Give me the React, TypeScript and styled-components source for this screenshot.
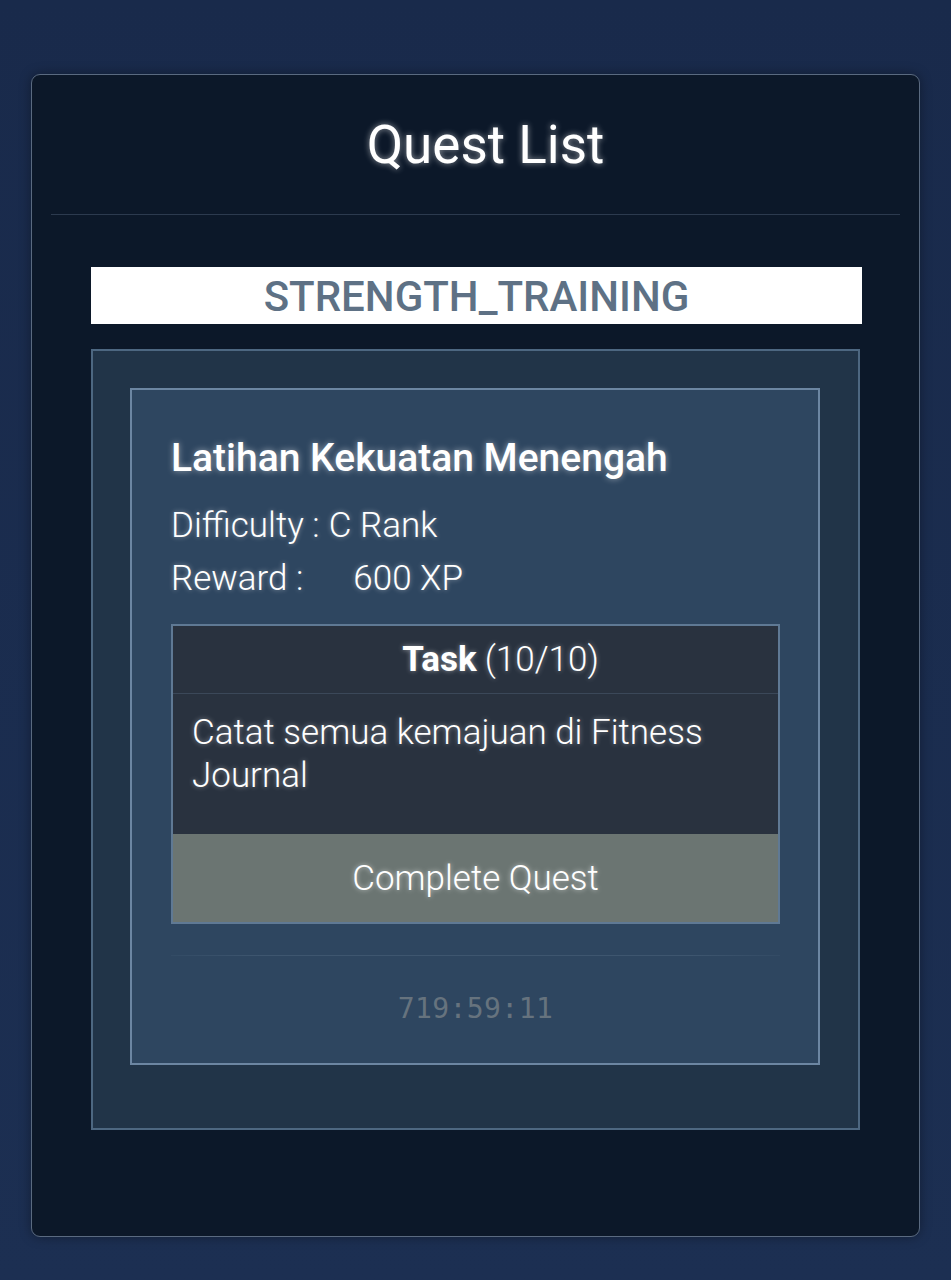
import React from "react";
import styled, { createGlobalStyle } from "styled-components";

const Global = createGlobalStyle`
  html, body {
    margin: 0;
    padding: 0;
    background: #1a2c4e;
    font-family: Roboto, "Noto Sans", "Liberation Sans", sans-serif;
  }
  * { box-sizing: border-box; }
`;

const Page = styled.div`
  min-height: 1280px;
  padding: 74px 31px 44px;
  background: linear-gradient(180deg, #192a4b 0%, #1c2f52 100%);
`;

const Card = styled.section`
  background: #0c1829;
  border: 1px solid #5a6a80;
  border-radius: 9px;
  padding: 0 0 106px;
  box-shadow: 0 0 12px rgba(0, 0, 0, 0.35);
`;

const Header = styled.header`
  height: 140px;
  margin: 0 19px;
  display: flex;
  align-items: center;
  justify-content: center;
  padding-left: 20px;
  border-bottom: 1px solid #2c3a4e;
`;

const Title = styled.h1`
  margin: 0;
  font-size: 53px;
  font-weight: 400;
  color: #ffffff;
  text-shadow: 0 0 6px rgba(255, 255, 255, 0.55);
`;

const Body = styled.div`
  padding: 52px 57px 0 59px;
  display: flex;
  flex-direction: column;
`;

const Category = styled.div`
  height: 57px;
  background: #ffffff;
  display: flex;
  align-items: center;
  justify-content: center;
  font-size: 42px;
  font-weight: 500;
  color: #5e7185;
  padding-top: 2px;
`;

const OuterPanel = styled.div`
  margin-top: 25px;
  margin-right: 2px;
  background: #213448;
  border: 2px solid #4d6781;
  padding: 37px 38px 63px 37px;
`;

const QuestCard = styled.article`
  background: #2e4660;
  border: 2px solid #6c86a2;
  padding: 47px 38px 38px 39px;
  display: flex;
  flex-direction: column;
`;

const QuestName = styled.h2`
  margin: 0;
  font-size: 39px;
  line-height: 43px;
  font-weight: 500;
  color: #ffffff;
  text-shadow: 0 0 6px rgba(255, 255, 255, 0.5);
`;

const Meta = styled.div`
  margin-top: 19px;
  display: flex;
  flex-direction: column;
`;

const MetaLine = styled.div`
  font-size: 35px;
  line-height: 53px;
  font-weight: 300;
  color: #ffffff;
  text-shadow: 0 0 5px rgba(255, 255, 255, 0.45);
  white-space: pre;
`;

const MetaValue = styled.span<{ $gap: number }>`
  margin-left: ${(p) => p.$gap}px;
`;

const TaskBox = styled.div`
  margin-top: 19px;
  border: 2px solid #5f7994;
  display: flex;
  flex-direction: column;
`;

const TaskHeader = styled.div`
  height: 68px;
  background: #29323f;
  border-bottom: 1px solid #3b4859;
  display: flex;
  align-items: center;
  justify-content: center;
  padding-left: 50px;
  font-size: 35px;
  color: #ffffff;
  text-shadow: 0 0 5px rgba(255, 255, 255, 0.45);
`;

const TaskLabel = styled.span`
  font-weight: 700;
  margin-right: 8px;
`;

const TaskCount = styled.span`
  font-weight: 300;
`;

const TaskText = styled.div`
  background: #29323f;
  padding: 17px 19px 37px;
  font-size: 35px;
  line-height: 43px;
  font-weight: 300;
  color: #ffffff;
  text-shadow: 0 0 5px rgba(255, 255, 255, 0.45);
`;

const CompleteButton = styled.button`
  height: 88px;
  border: none;
  margin: 0;
  padding: 0;
  background: #6b7572;
  color: #ffffff;
  font-family: inherit;
  font-size: 35px;
  font-weight: 300;
  text-shadow: 0 0 5px rgba(255, 255, 255, 0.6);
  cursor: pointer;
`;

const Divider = styled.div`
  margin-top: 31px;
  height: 1px;
  background: linear-gradient(90deg, rgba(70, 95, 120, 0.2), #3e566f 15%, #3e566f 85%, rgba(70, 95, 120, 0.2));
`;

const Timer = styled.div`
  margin-top: 36px;
  text-align: center;
  font-family: "DejaVu Sans Mono", "Liberation Mono", monospace;
  font-size: 28px;
  line-height: 33px;
  font-weight: 400;
  letter-spacing: 0.4px;
  color: #66737e;
`;

export default function App() {
  return (
    <>
      <Global />
      <Page>
        <Card>
          <Header>
            <Title>Quest List</Title>
          </Header>
          <Body>
            <Category>STRENGTH_TRAINING</Category>
            <OuterPanel>
              <QuestCard>
                <QuestName>Latihan Kekuatan Menengah</QuestName>
                <Meta>
                  <MetaLine>
                    Difficulty :<MetaValue $gap={9}>C Rank</MetaValue>
                  </MetaLine>
                  <MetaLine>
                    Reward :<MetaValue $gap={50}>600 XP</MetaValue>
                  </MetaLine>
                </Meta>
                <TaskBox>
                  <TaskHeader>
                    <TaskLabel>Task</TaskLabel>
                    <TaskCount>(10/10)</TaskCount>
                  </TaskHeader>
                  <TaskText>Catat semua kemajuan di Fitness Journal</TaskText>
                  <CompleteButton>Complete Quest</CompleteButton>
                </TaskBox>
                <Divider />
                <Timer>719:59:11</Timer>
              </QuestCard>
            </OuterPanel>
          </Body>
        </Card>
      </Page>
    </>
  );
}
